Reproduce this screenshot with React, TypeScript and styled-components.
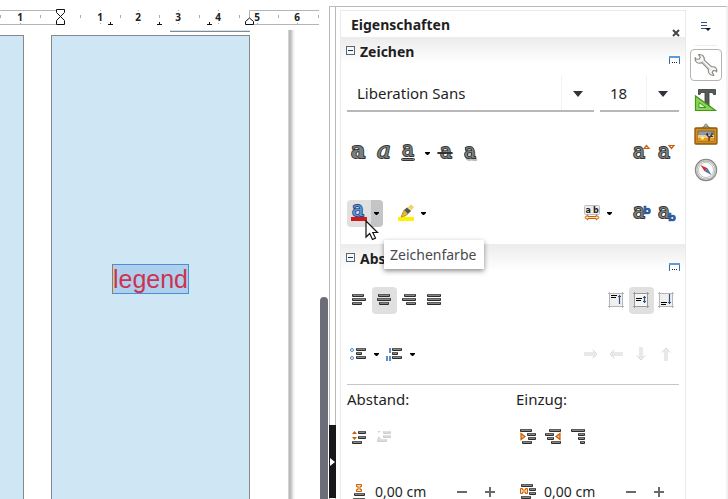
import React from "react";
import styled, { createGlobalStyle, css } from "styled-components";

const GlobalStyle = createGlobalStyle`
  * { box-sizing: border-box; }
  body { margin: 0; background: #fff; color: #1f1f23; font: 15px/20px "Noto Sans", "Open Sans", sans-serif; overflow: hidden; }
  button, input { font: inherit; color: inherit; border: 0; padding: 0; margin: 0; background: transparent; min-width: 0; }
  svg { display: block; flex: none; }
`;

const Window = styled.main`
  display: grid;
  grid-template-columns: minmax(0, 1fr) 9px 7px 392px;
  height: 100vh;
  overflow: hidden;
`;

/* ---------- document ---------- */

const Editor = styled.section`
  display: flex;
  flex-direction: column;
  min-width: 0;
  overflow: hidden;
`;

const Canvas = styled.div`
  flex: 1;
  display: flex;
  min-height: 0;
`;

const PageSheet = styled.div`
  display: flex;
  flex: none;
  gap: 27px;
  padding-right: 38px;
`;

const PageEdge = styled.div`
  width: 7px;
  background: linear-gradient(to right, #e0e0e0, #b2b2b2 25%, #c8c8c8 45%, #f0f0f0 80%, #fff);
`;

const LabelColumn = styled.div`
  display: flex;
  flex-direction: column;
`;

const LabelAbove = styled.div<{ $visible?: boolean }>`
  align-self: flex-end;
  width: ${(p) => (p.$visible ? "80px" : "0")};
  height: 2px;
  margin-bottom: 3px;
  border-bottom: 1px solid #85898c;
  background: #cfe6f4;
`;

const Label = styled.div<{ $cut?: boolean }>`
  flex: 1;
  display: flex;
  justify-content: center;
  align-items: flex-start;
  width: ${(p) => (p.$cut ? "24px" : "199px")};
  padding-top: 228px;
  background: #cfe6f4;
  border: solid #85898c;
  border-width: ${(p) => (p.$cut ? "1px 1px 0 0" : "1px 1px 0 1px")};
`;

const TextFrame = styled.div`
  border: 1px solid #4a90d9;
  border-left-color: #b87333;
  background: #afd0ec;
  color: #cc3350;
  font: 25px/28px "Liberation Sans", Arial, sans-serif;
`;

const ScrollTrack = styled.div`
  display: flex;
  align-items: flex-end;
`;

const ScrollThumb = styled.div`
  width: 8px;
  height: calc(100% - 297px);
  border-radius: 4px 4px 0 0;
  background: #6b6d78;
`;

const Splitter = styled.div`
  display: flex;
  flex-direction: column;
  margin-top: 6px;
  padding-top: 418px;
  border: solid #b9b9b9;
  border-width: 1px 1px 0;
`;

const SplitHandle = styled.button`
  display: flex;
  align-items: center;
  justify-content: center;
  height: 73px;
  margin: 0 -1px;
  background: #18181b;
`;

/* ---------- sidebar ---------- */

const Sidebar = styled.aside`
  display: flex;
  margin-top: 6px;
  padding-left: 4px;
  border-top: 1px solid #b9b9b9;
  border-right: 2px solid #f2f2f2;
  overflow: hidden;
`;

const Deck = styled.div`
  flex: 1;
  min-width: 0;
  margin-top: 3px;
  border: solid #ebebeb;
  border-width: 1px 1px 0;
`;

const DeckTitle = styled.header`
  display: flex;
  justify-content: space-between;
  align-items: flex-end;
  height: 26px;
  padding: 0 5px 0 10px;
`;

const Title = styled.h2`
  margin: 0;
  font-size: 14px;
  line-height: 24px;
  font-weight: 700;
`;

const CloseButton = styled.button`
  height: 8px;
`;

const SectionHeader = styled.header`
  display: flex;
  align-items: center;
  gap: 5px;
  height: 30px;
  padding: 0 5px;
  background: linear-gradient(#ececec, #fff 90%);
`;

const CollapseButton = styled.button`
  padding-bottom: 3px;
`;

const MoreButton = styled.button`
  align-self: flex-end;
  margin: 0 0 3px auto;
`;

const SectionBody = styled.div<{ $top?: number }>`
  padding: ${(p) => p.$top ?? 0}px 6px 0;
`;

const ComboRow = styled.div`
  display: grid;
  grid-template-columns: minmax(0, 1fr) 79px;
  gap: 6px;
  padding: 9px 0 28px;
`;

const Combo = styled.div`
  display: flex;
  height: 36px;
  border-bottom: 2px solid #b8b8b8;
`;

const ComboInput = styled.input`
  flex: 1;
  padding-left: 10px;
`;

const ComboButton = styled.button`
  display: flex;
  align-items: center;
  justify-content: center;
  width: 33px;
  padding-top: 2px;
  border-left: 1px solid #f2f2f2;
`;

const ToolRow = styled.div<{ $after: number }>`
  display: flex;
  justify-content: space-between;
  height: 27px;
  margin-bottom: ${(p) => p.$after}px;
`;

const ToolGroup = styled.div<{ $gap?: number }>`
  display: flex;
  gap: ${(p) => p.$gap ?? 0}px;
`;

const ToolButton = styled.button<{ $active?: boolean }>`
  display: flex;
  align-items: center;
  justify-content: center;
  width: 25px;
  height: 27px;
  padding: 0 1px 1px 0;
  border-radius: 4px;
  ${(p) => p.$active && css`background: #e0e0e0;`}
`;

const Split = styled.div<{ $hover?: boolean }>`
  position: relative;
  display: flex;
  height: 27px;
  border-radius: 4px;
  ${(p) => p.$hover && css`background: linear-gradient(to right, #e0e0e0 24px, #c4c5c7 24px);`}
`;

const SplitMain = styled.button`
  display: flex;
  align-items: center;
  justify-content: center;
  width: 24px;
  padding-bottom: 1px;
`;

const DropButton = styled.button`
  display: flex;
  align-items: center;
  justify-content: center;
  width: 12px;
  padding: 0 1px 1px 0;
`;

const Pointer = styled.svg`
  position: absolute;
  z-index: 3;
  left: 18px;
  top: 20px;
`;

const Tooltip = styled.div`
  position: absolute;
  z-index: 2;
  left: 37px;
  top: 40px;
  padding: 5px 8px 4px 6px;
  background: #fff;
  color: #4a4a4e;
  font-size: 14px;
  white-space: nowrap;
  box-shadow: 0 2px 5px rgba(0, 0, 0, 0.45);
`;

const Divider = styled.hr`
  margin: 0 0 4px;
  border: 0;
  border-top: 1px solid #c6c6c6;
`;

const Columns = styled.div`
  display: grid;
  grid-template-columns: 1fr 1fr;
  gap: 6px;
`;

const GroupLabel = styled.label`
  display: block;
  margin-bottom: 15px;
`;

const SpinField = styled.div`
  display: flex;
  align-items: center;
  height: 36px;
  padding-right: 6px;
`;

const SpinIcon = styled.span`
  display: flex;
  justify-content: center;
  width: 24px;
`;

const SpinInput = styled.input`
  flex: 1;
  width: 40px;
  padding-left: 4px;
  font-size: 14px;
`;

const SpinButton = styled.button`
  display: flex;
  align-items: center;
  justify-content: center;
  width: 28px;
  height: 36px;
`;

const TabBar = styled.nav`
  display: flex;
  flex-direction: column;
  align-items: center;
  width: 40px;
  padding-top: 9px;
`;

const TabMenu = styled.button`
  display: flex;
  align-items: center;
  justify-content: center;
  width: 22px;
  height: 30px;
  padding-bottom: 8px;
  border-bottom: 1px solid #ececec;
  margin-bottom: 3px;
`;

const TabButton = styled.button<{ $active?: boolean }>`
  display: flex;
  align-items: center;
  justify-content: center;
  width: 32px;
  height: 32px;
  margin-bottom: 3px;
  border: 1px solid ${(p) => (p.$active ? "#b4b4b4" : "transparent")};
  border-radius: 4px;
`;

/* ---------- drawings ---------- */

const MARKS = [
  [20, 1], [100, 1], [138, 2], [178, 3], [218, 4], [257, 5], [297, 6],
];
const HALF_TICKS = [0, 40, 80, 120, 159, 199, 239, 278, 318];
const TAB_STOPS = [110, 159, 209];

const Ruler = () => (
  <svg width="320" height="30" role="img" aria-label="Lineal">
    <path d="M0 10.5H56M249.5 18V10.5H319M0 24.5H56M254 24.5H319" stroke="#b5b5b5" fill="none" />
    {HALF_TICKS.map((x) => <path key={x} d={`M${x + 0.5} 15v3`} stroke="#aaa" />)}
    {MARKS.map(([x, n]) => (
      <g key={x}>
        <path d={`M${x + 0.5} 10v1M${x + 0.5} 23v1`} stroke="#aaa" />
        <text x={x} y="21" textAnchor="middle" fontFamily="Noto Sans, sans-serif" fontSize="10" fontWeight="700" fill="#222">{n}</text>
      </g>
    ))}
    {TAB_STOPS.map((x) => <path key={x} d={`M${x + 0.5} 22v3M${x - 2} 24.5h5`} stroke="#111" />)}
    <path d="M56.5 9.5h8v3l-4 4 4 4v4h-8v-4l4-4-4-4z" fill="#fff" stroke="#111" />
    <path d="M245.5 24.5v-3l4-3.5 4 3.5v3z" fill="#fff" stroke="#111" />
  </svg>
);

const Caret = ({ big }: { big?: boolean }) =>
  big ? (
    <svg width="10" height="6"><path d="M0 0h10L5 6z" fill="#33343b" /></svg>
  ) : (
    <svg width="5" height="3"><path d="M0 0h5v1L3 3H2L0 1z" fill="#000" /></svg>
  );

type GlyphProps = { x: number; y: number; size?: number; italic?: boolean; blue?: boolean; bold?: boolean; $soft?: boolean };

const GlyphText = styled.text<{ $soft?: boolean }>`
  ${(p) => p.$soft && css`filter: drop-shadow(1px 2px 0 #bdbdbd);`}
`;

const Glyph = ({ x, y, size = 20, italic, blue, bold, $soft }: GlyphProps) => (
  <GlyphText
    $soft={$soft}
    x={x} y={y} fontSize={size} fontFamily="DejaVu Serif, serif" fontWeight={bold ? 700 : 400}
    fontStyle={italic ? "italic" : "normal"}
    fill={blue ? "#5f97d6" : "#7c807c"} stroke={blue ? "#204a87" : "#2e3436"}
    strokeWidth="1.8" strokeLinejoin="round" paintOrder="stroke"
  >a</GlyphText>
);

const SmallB = ({ y }: { y: number }) => (
  <text x="10" y={y} fontSize="11" fontWeight="700" fontFamily="DejaVu Sans, sans-serif" fill="#3465a4" stroke="#204a87" strokeWidth="0.6">b</text>
);

type Bar = [x: number, y: number, w: number];
const Bars = ({ bars, faint }: { bars: Bar[]; faint?: boolean }) => (
  <g>
    {bars.map(([x, y, w]) => (
      <g key={`${x}-${y}`}>
        <rect x={x} y={y} width={w} height="3" rx="1" fill={faint ? "#cfcfcf" : "#2b2d2c"} />
        <rect x={x + 1} y={y} width={w - 2} height="1" fill={faint ? "#e0e0e0" : "#5a5d5a"} />
        <rect x={x + 1} y={y + 1} width={w - 2} height="1" fill={faint ? "#dadada" : "#858884"} />
      </g>
    ))}
  </g>
);

const BoxIcon = ({ children, w = 16 }: { children: React.ReactNode; w?: number }) => (
  <svg width={w} height="18" viewBox={`0 0 ${w} 18`} overflow="visible">{children}</svg>
);

const ORANGE = "#ce5c00";

const icons = {
  bold: <BoxIcon><Glyph x={0} y={14} size={22} bold /></BoxIcon>,
  italic: <BoxIcon><Glyph x={1} y={14} size={23} italic /></BoxIcon>,
  underline: <BoxIcon><Glyph x={1} y={12} /><rect x="0.5" y="14.5" width="13" height="2" rx="1" fill="#858985" stroke="#2e3436" /></BoxIcon>,
  strike: <BoxIcon><Glyph x={2} y={14} /><rect x="-0.5" y="8.5" width="15" height="1" rx="0.5" fill="#858985" stroke="#2e3436" /></BoxIcon>,
  shadow: <BoxIcon><Glyph x={1} y={14} $soft /></BoxIcon>,
  grow: <BoxIcon><Glyph x={0} y={14} /><path d="M11 4.500h5L13.500 1.500z" fill="#fff" stroke={ORANGE} strokeWidth="1.200" /></BoxIcon>,
  shrink: <BoxIcon><Glyph x={0} y={14} /><path d="M11 1.500h5L13.500 4.500z" fill="#fff" stroke={ORANGE} strokeWidth="1.200" /></BoxIcon>,
  superscript: <BoxIcon><Glyph x={0} y={14} /><SmallB y={10} /></BoxIcon>,
  subscript: <BoxIcon><Glyph x={0} y={14} /><SmallB y={17} /></BoxIcon>,
  fontColor: <BoxIcon><Glyph x={1} y={12} blue /><rect x="0" y="13" width="16" height="4" fill="#cc1a1f" /></BoxIcon>,
  highlight: (
    <BoxIcon>
      <rect x="0" y="13" width="16" height="4" fill="#fff200" />
      <path d="M9 4l4-3.500L16 3l-4 5z" fill="#f0cf6c" />
      <path d="M10.500 3.500l2.500 2.500" stroke="#fbeeb8" />
      <path d="M6 6l3-2.500L13 7l-3 3z" fill="#55585a" />
      <path d="M6 6l4 4-3 2-4 1z" fill="#e3b93a" stroke="#a5821b" strokeWidth="0.700" />
    </BoxIcon>
  ),
  spacing: (
    <BoxIcon>
      <rect x="0.500" y="1.500" width="15" height="9" rx="1" fill="#eeeeec" stroke="#bcbcbc" />
      <text x="1.500" y="9" fontSize="8" fontWeight="700" fontFamily="DejaVu Sans, sans-serif" fill="#222">a</text>
      <text x="9" y="9" fontSize="8" fontWeight="700" fontFamily="DejaVu Sans, sans-serif" fill="#222">b</text>
      <path d="M.8 13.500l3-2.500v1.500h8.400V11l3 2.500-3 2.500v-1.500H3.800V16z" fill="#fce0c0" stroke={ORANGE} />
    </BoxIcon>
  ),
  left: <BoxIcon w={14}><Bars bars={[[0, 3, 12], [0, 7, 14], [0, 11, 10]]} /></BoxIcon>,
  center: <BoxIcon w={14}><Bars bars={[[1, 3, 12], [0, 7, 14], [2, 11, 10]]} /></BoxIcon>,
  right: <BoxIcon w={14}><Bars bars={[[2, 3, 12], [0, 7, 14], [4, 11, 10]]} /></BoxIcon>,
  justify: <BoxIcon w={14}><Bars bars={[[0, 3, 14], [0, 7, 14], [0, 11, 14]]} /></BoxIcon>,
  bullets: (
    <BoxIcon w={18}>
      <circle cx="2" cy="5" r="1.500" fill="#fff" stroke="#4f86c4" />
      <circle cx="2" cy="13" r="1.500" fill="#fff" stroke="#4f86c4" />
      <Bars bars={[[6, 3, 10], [6, 7, 6], [6, 11, 10]]} />
    </BoxIcon>
  ),
  numbering: (
    <BoxIcon w={18}>
      <path d="M4 3v5M1 11v5M4 11v5" stroke="#5c8fc9" strokeWidth="2" />
      <Bars bars={[[6, 3, 10], [6, 7, 6], [6, 11, 10]]} />
    </BoxIcon>
  ),
  moreSpace: (
    <BoxIcon w={14}>
      <path d="M0 6l2.500-3L5 6zM0 9l2.500 3L5 9z" fill={ORANGE} />
      <Bars bars={[[6, 3, 8], [6, 8, 8], [0, 13, 10]]} />
    </BoxIcon>
  ),
  lessSpace: (
    <BoxIcon w={14}>
      <path d="M0 3h4L2 5zM0 11h4L2 8z" fill="#d8d8d8" />
      <Bars faint bars={[[6, 3, 8], [6, 7, 8], [0, 11, 10]]} />
    </BoxIcon>
  ),
  indentMore: (
    <BoxIcon>
      <Bars bars={[[0, 1, 12], [7, 5, 9], [8, 9, 8], [2, 13, 10]]} />
      <path d="M1 5.500L5 8.500 1 11.500z" fill="#f5b678" stroke={ORANGE} strokeWidth="1.200" />
    </BoxIcon>
  ),
  indentLess: (
    <BoxIcon>
      <Bars bars={[[4, 1, 12], [0, 5, 9], [2, 9, 7], [6, 13, 10]]} />
      <path d="M15 5.500L11 8.500l4 3z" fill="#f5b678" stroke={ORANGE} strokeWidth="1.200" />
    </BoxIcon>
  ),
  hanging: <BoxIcon w={14}><Bars bars={[[0, 1, 14], [7, 5, 7], [7, 9, 7], [9, 13, 5]]} /></BoxIcon>,
  above: (
    <BoxIcon w={12}>
      <path d="M3.500 1.500h5v2h-1.500v3h1.500v2h-5v-2h1.500v-3h-1.500z" fill="#fce0c0" stroke={ORANGE} />
      <Bars bars={[[1, 10, 11], [0, 15, 12]]} />
    </BoxIcon>
  ),
  before: (
    <BoxIcon>
      <Bars bars={[[1, 1, 12], [9, 5, 7], [9, 9, 7], [1, 13, 10]]} />
      <path d="M.5 5.500h2v1.500h3V5.500h2v5h-2V9h-3v1.500h-2z" fill="#fce0c0" stroke={ORANGE} />
    </BoxIcon>
  ),
};

const VerticalIcon = ({ kind }: { kind: "top" | "middle" | "bottom" }) => {
  const y = { top: 4, middle: 7, bottom: 11 }[kind];
  const arrow = {
    top: "M11.5 13V4M10 5.5h3",
    middle: "M11.5 5v7M10 6.5h3M10 10.5h3",
    bottom: "M11.5 3v10M10 11.5h3",
  }[kind];
  return (
    <BoxIcon>
      <rect x="2" y="2" width="13" height="13" fill={kind === "middle" ? "#f4f4f4" : "#f0f0f0"} />
      <path d="M0 2.5h16M0 15.5h16M1.5 1v16M14.5 1v16" stroke={kind === "middle" ? "#999" : "#b5b5b5"} />
      <rect x="3" y={y} width="6" height="1" fill="#000" />
      <rect x="3" y={y + 2} width="5" height="1" fill="#000" />
      <path d={arrow} stroke="#31507c" strokeWidth="1.2" />
    </BoxIcon>
  );
};

const FaintArrow = ({ turn }: { turn: number }) => (
  <svg width="16" height="16" viewBox="0 0 16 16">
    <g transform={`rotate(${turn} 8 8)`} fill="none" stroke="#d2d2d2">
      <path d="M1 7h11M1 9h11" />
      <path d="M9.500 4L14 8l-4.500 4" />
    </g>
  </svg>
);

const CollapseBox = () => (
  <svg width="9" height="9"><rect x=".5" y=".5" width="8" height="8" fill="#f2f7fc" stroke="#5a6672" /><path d="M2 4.5h5" stroke="#23324a" /></svg>
);

const MoreIcon = () => (
  <svg width="11" height="8"><path d="M0 1h11" stroke="#5b9bd9" strokeWidth="2" /><path d="M.5 2v6M10.5 2v6" stroke="#3f6da5" /><path d="M1 2h9v6H1z" fill="#fff" /><path d="M3 6.5h1M5 6.5h1M7 6.5h1" stroke="#222" /></svg>
);

const WrenchIcon = () => (
  <svg width="24" height="24" viewBox="0 0 24 24">
    <path d="M4.500 1.500L6.300 4.200 5 6.300 2 6 1.200 4.500C.7 7.500 2.200 10.200 5.500 10.300L8 9.600l6.400 6.800c-.5 3.200 1.200 5.800 4.600 6.100l1-.3-1.800-2.600 1-2.100 2.500.2 1 1.300c.8-3.400-1.500-5.600-5-5.200L10.300 7.200C10.700 4 8.500 1 4.500 1.500z" fill="#f6f6f3" stroke="#858782" strokeWidth="1.100" strokeLinejoin="round" />
    <path d="M8 8.200l8 8.300" stroke="#c2c4bf" strokeWidth="1" />
  </svg>
);

const StylesIcon = () => (
  <svg width="24" height="24" viewBox="0 0 24 24">
    <path d="M4.500 1.500h17v5h-2l-1-2h-3.500v13.500l1.500.5v2h-7v-2l1.500-.5V4.500H7l-1 2H4.500z" fill="#555a5b" stroke="#353a3b" strokeWidth=".8" />
    <path d="M1.500 8v14.500h20z" fill="#8ad45c" stroke="#3f9a12" strokeWidth="1.200" />
    <path d="M5 14.500v5h7z" fill="#e7f7dc" stroke="#3f9a12" />
  </svg>
);

const GalleryIcon = () => (
  <svg width="24" height="24" viewBox="0 0 24 24">
    <path d="M7 6l5-4 5 4" fill="none" stroke="#777" strokeWidth="1.200" />
    <circle cx="12" cy="2.500" r="1.500" fill="#bbb" stroke="#777" strokeWidth=".7" />
    <rect x="1" y="5" width="22" height="16" rx="1" fill="#d28b25" stroke="#8f5902" strokeWidth="1.300" />
    <rect x="4" y="8" width="16" height="10" fill="#7d9dbd" stroke="#8f5902" strokeWidth=".7" />
    <rect x="4" y="12" width="16" height="3" fill="#f8c878" />
    <rect x="4" y="15" width="16" height="3" fill="#e09a2c" />
    <circle cx="8.500" cy="15" r="1.500" fill="#fff3a8" />
    <path d="M15 18v-4l-3-3M15 15l3-3.500V9.500M16 13.500h3M13.500 12.500V10" stroke="#3b3430" fill="none" strokeWidth="1.200" />
  </svg>
);

const CompassIcon = () => (
  <svg width="24" height="24" viewBox="0 0 24 24">
    <circle cx="12" cy="12" r="10" fill="#f6f6f6" stroke="#82857f" strokeWidth="2.400" />
    <circle cx="12" cy="12" r="9.600" fill="none" stroke="#c7c9c4" strokeWidth="1.200" />
    <circle cx="12" cy="12" r="7.500" fill="#fff" stroke="#b4b6b2" strokeWidth=".8" />
    <path d="M6.500 7l7 3.200-3 3z" fill="#e02b2b" />
    <path d="M17.500 17l-7-3.800 3-3z" fill="#4a78b5" />
  </svg>
);

/* ---------- composed parts ---------- */

const Tool = ({ label, active, children }: { label: string; active?: boolean; children: React.ReactNode }) => (
  <ToolButton type="button" aria-label={label} aria-pressed={active} $active={active}>{children}</ToolButton>
);

const SplitTool = ({ label, hover, children, overlay }: { label: string; hover?: boolean; children: React.ReactNode; overlay?: React.ReactNode }) => (
  <Split $hover={hover}>
    <SplitMain type="button" aria-label={label}>{children}</SplitMain>
    <DropButton type="button" aria-label={`${label} – Auswahl`}><Caret /></DropButton>
    {overlay}
  </Split>
);

const Header = ({ title }: { title: string }) => (
  <SectionHeader>
    <CollapseButton type="button" aria-label={`${title} einklappen`}><CollapseBox /></CollapseButton>
    <Title>{title}</Title>
    <MoreButton type="button" aria-label="Weitere Optionen"><MoreIcon /></MoreButton>
  </SectionHeader>
);

const Spin = ({ id, icon }: { id: string; icon: React.ReactNode }) => (
  <SpinField>
    <SpinIcon>{icon}</SpinIcon>
    <SpinInput id={id} defaultValue="0,00 cm" />
    <SpinButton type="button" aria-label="Verringern"><svg width="10" height="10"><path d="M0 5h10" stroke="#6a6a6e" strokeWidth="2" /></svg></SpinButton>
    <SpinButton type="button" aria-label="Erhöhen"><svg width="10" height="10"><path d="M0 5h10M5 0v10" stroke="#6a6a6e" strokeWidth="2" /></svg></SpinButton>
  </SpinField>
);

const ColorOverlay = () => (
  <>
    <Pointer width="14" height="22" viewBox="0 0 14 22">
      <path d="M1 1v16l3.700-3.500 2.800 6 3-1.400-2.700-5.600H12.500z" fill="#fff" stroke="#111" strokeWidth="1.200" />
    </Pointer>
    <Tooltip role="tooltip">Zeichenfarbe</Tooltip>
  </>
);

export default function App() {
  return (
    <>
      <GlobalStyle />
      <Window>
        <Editor>
          <Ruler />
          <Canvas>
            <PageSheet>
              <LabelColumn>
                <LabelAbove />
                <Label $cut />
              </LabelColumn>
              <LabelColumn>
                <LabelAbove $visible />
                <Label><TextFrame>legend</TextFrame></Label>
              </LabelColumn>
            </PageSheet>
            <PageEdge />
          </Canvas>
        </Editor>
        <ScrollTrack><ScrollThumb /></ScrollTrack>
        <Splitter>
          <SplitHandle type="button" aria-label="Seitenleiste ausblenden">
            <svg width="5" height="8"><path d="M0 0l5 4-5 4z" fill="#fff" /></svg>
          </SplitHandle>
        </Splitter>
        <Sidebar>
          <Deck>
            <DeckTitle>
              <Title>Eigenschaften</Title>
              <CloseButton type="button" aria-label="Schließen">
                <svg width="8" height="8"><path d="M1 1l6 6M7 1L1 7" stroke="#44464c" strokeWidth="2" /></svg>
              </CloseButton>
            </DeckTitle>

            <Header title="Zeichen" />
            <SectionBody>
              <ComboRow>
                <Combo>
                  <ComboInput aria-label="Schriftname" defaultValue="Liberation Sans" />
                  <ComboButton type="button" aria-label="Schriften anzeigen"><Caret big /></ComboButton>
                </Combo>
                <Combo>
                  <ComboInput aria-label="Schriftgröße" size={2} defaultValue="18" />
                  <ComboButton type="button" aria-label="Größen anzeigen"><Caret big /></ComboButton>
                </Combo>
              </ComboRow>
              <ToolRow $after={33}>
                <ToolGroup>
                  <Tool label="Fett">{icons.bold}</Tool>
                  <Tool label="Kursiv">{icons.italic}</Tool>
                  <Tool label="Unterstrichen">{icons.underline}</Tool>
                  <DropButton type="button" aria-label="Unterstreichungsart"><Caret /></DropButton>
                  <Tool label="Durchgestrichen">{icons.strike}</Tool>
                  <Tool label="Schatten">{icons.shadow}</Tool>
                </ToolGroup>
                <ToolGroup>
                  <Tool label="Schrift vergrößern">{icons.grow}</Tool>
                  <Tool label="Schrift verkleinern">{icons.shrink}</Tool>
                </ToolGroup>
              </ToolRow>
              <ToolRow $after={17}>
                <ToolGroup $gap={11}>
                  <SplitTool label="Zeichenfarbe" hover overlay={<ColorOverlay />}>{icons.fontColor}</SplitTool>
                  <SplitTool label="Zeichenhintergrund">{icons.highlight}</SplitTool>
                </ToolGroup>
                <ToolGroup $gap={13}>
                  <SplitTool label="Zeichenabstand">{icons.spacing}</SplitTool>
                  <ToolGroup>
                    <Tool label="Hochgestellt">{icons.superscript}</Tool>
                    <Tool label="Tiefgestellt">{icons.subscript}</Tool>
                  </ToolGroup>
                </ToolGroup>
              </ToolRow>
            </SectionBody>

            <Header title="Absatz" />
            <SectionBody $top={13}>
              <ToolRow $after={27}>
                <ToolGroup>
                  <Tool label="Linksbündig">{icons.left}</Tool>
                  <Tool label="Zentriert" active>{icons.center}</Tool>
                  <Tool label="Rechtsbündig">{icons.right}</Tool>
                  <Tool label="Blocksatz">{icons.justify}</Tool>
                </ToolGroup>
                <ToolGroup>
                  <Tool label="Oben"><VerticalIcon kind="top" /></Tool>
                  <Tool label="Mitte" active><VerticalIcon kind="middle" /></Tool>
                  <Tool label="Unten"><VerticalIcon kind="bottom" /></Tool>
                </ToolGroup>
              </ToolRow>
              <ToolRow $after={16}>
                <ToolGroup>
                  <SplitTool label="Aufzählung">{icons.bullets}</SplitTool>
                  <SplitTool label="Nummerierung">{icons.numbering}</SplitTool>
                </ToolGroup>
                <ToolGroup>
                  <Tool label="Herunterstufen"><FaintArrow turn={0} /></Tool>
                  <Tool label="Heraufstufen"><FaintArrow turn={180} /></Tool>
                  <Tool label="Nach unten"><FaintArrow turn={90} /></Tool>
                  <Tool label="Nach oben"><FaintArrow turn={270} /></Tool>
                </ToolGroup>
              </ToolRow>
              <Divider />
              <Columns>
                <div>
                  <GroupLabel htmlFor="abstand">Abstand:</GroupLabel>
                  <ToolRow $after={23}>
                    <ToolGroup>
                      <Tool label="Abstand erhöhen">{icons.moreSpace}</Tool>
                      <Tool label="Abstand verringern">{icons.lessSpace}</Tool>
                    </ToolGroup>
                  </ToolRow>
                  <Spin id="abstand" icon={icons.above} />
                </div>
                <div>
                  <GroupLabel htmlFor="einzug">Einzug:</GroupLabel>
                  <ToolRow $after={23}>
                    <ToolGroup>
                      <Tool label="Einzug erhöhen">{icons.indentMore}</Tool>
                      <Tool label="Einzug verringern">{icons.indentLess}</Tool>
                      <Tool label="Hängender Einzug">{icons.hanging}</Tool>
                    </ToolGroup>
                  </ToolRow>
                  <Spin id="einzug" icon={icons.before} />
                </div>
              </Columns>
            </SectionBody>
          </Deck>
          <TabBar>
            <TabMenu type="button" aria-label="Einstellungen der Seitenleiste">
              <svg width="10" height="10"><path d="M0 .5h6M0 3.5h6M0 6.5h6" stroke="#35527e" /><path d="M4 6h6L7 9z" fill="#111a2c" /></svg>
            </TabMenu>
            <TabButton type="button" $active aria-label="Eigenschaften"><WrenchIcon /></TabButton>
            <TabButton type="button" aria-label="Formatvorlagen"><StylesIcon /></TabButton>
            <TabButton type="button" aria-label="Gallery"><GalleryIcon /></TabButton>
            <TabButton type="button" aria-label="Navigator"><CompassIcon /></TabButton>
          </TabBar>
        </Sidebar>
      </Window>
    </>
  );
}
